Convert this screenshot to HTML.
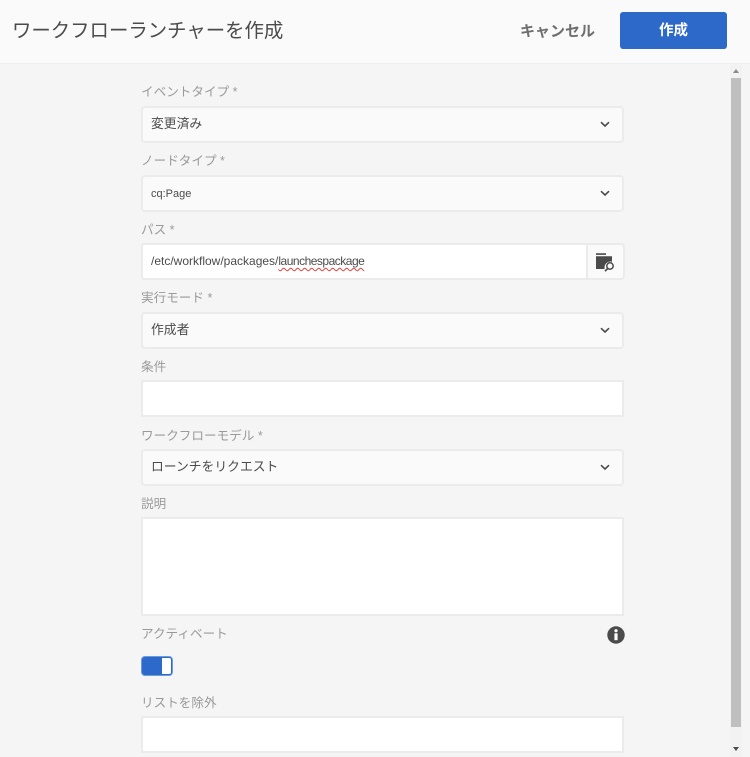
<!DOCTYPE html>
<html lang="ja">
<head>
<meta charset="utf-8">
<style>
html,body{margin:0;padding:0}
body{width:750px;height:757px;overflow:hidden;background:#f5f5f5;position:relative;font-family:"Liberation Sans","Noto Sans CJK JP",sans-serif;color:#4b4b4b}
.a{position:absolute;white-space:nowrap}
.hdr{left:0;top:0;width:750px;height:63px;background:#fafafa;border-bottom:1px solid #efefef}
.title{left:12px;top:18px;font-size:19.4px;line-height:26px;color:#4b4b4b}
.cancel{left:520px;top:21px;font-size:15px;line-height:22px;font-weight:bold;color:#6e6e6e}
.btn{left:620px;top:12px;width:107px;height:37px;background:#2d69c9;border-radius:3px;color:#fff;font-size:14.5px;font-weight:bold;line-height:38px;text-align:center}
.lbl{left:141px;font-size:12.6px;line-height:18px;color:#9a9a9a}
.f{left:141px;width:479px;border:2px solid #ebebeb;border-radius:4px}
.sel{background:#fafafa;height:33px;top:0}
.inp{background:#fff;border-radius:0}
.t{left:151px;font-size:12.8px;line-height:18px;color:#4b4b4b}
svg{position:absolute;display:block}
</style>
</head>
<body>
<div class="a hdr"></div>
<div class="a title">ワークフローランチャーを作成</div>
<div class="a cancel">キャンセル</div>
<div class="a btn">作成</div>

<div class="a lbl" style="top:83px">イベントタイプ *</div>
<div class="a f sel" style="top:106px"></div>
<div class="a t" style="top:115px">変更済み</div>
<svg style="left:600px;top:121px" width="10" height="7" viewBox="0 0 10 7"><path d="M1 1.2L5 5L9 1.2" fill="none" stroke="#4b4b4b" stroke-width="1.6"/></svg>

<div class="a lbl" style="top:152px">ノードタイプ *</div>
<div class="a f sel" style="top:175px"></div>
<div class="a t" style="top:185px;font-size:11px">cq:Page</div>
<svg style="left:600px;top:190px" width="10" height="7" viewBox="0 0 10 7"><path d="M1 1.2L5 5L9 1.2" fill="none" stroke="#4b4b4b" stroke-width="1.6"/></svg>

<div class="a lbl" style="top:221px">パス *</div>
<div class="a f inp" style="top:243px;height:33px;width:443px;border-right:0;border-radius:3px 0 0 3px"></div>
<div class="a" style="left:586px;top:243px;width:35px;height:33px;background:#fafafa;border:2px solid #ebebeb;border-radius:0 4px 4px 0"></div>
<div class="a t" style="top:252px;font-size:12px">/etc/workflow/packages/<span style="letter-spacing:-0.5px;text-decoration:underline wavy #e0403a 1px;text-underline-offset:2px">launchespackage</span></div>
<svg style="left:595px;top:252px" width="21" height="20" viewBox="0 0 21 20"><path d="M1 1.2h10v1.7H1zM1 4.3h16v5.4a6 6 0 0 0-7.3 7.3H1z" fill="#4b4b4b"/><circle cx="15" cy="14" r="3.2" fill="none" stroke="#4b4b4b" stroke-width="1.5"/><path d="M12.7 16.5L10 19.2" stroke="#4b4b4b" stroke-width="1.7"/></svg>

<div class="a lbl" style="top:289px">実行モード *</div>
<div class="a f sel" style="top:312px"></div>
<div class="a t" style="top:321px">作成者</div>
<svg style="left:600px;top:327px" width="10" height="7" viewBox="0 0 10 7"><path d="M1 1.2L5 5L9 1.2" fill="none" stroke="#4b4b4b" stroke-width="1.6"/></svg>

<div class="a lbl" style="top:358px">条件</div>
<div class="a f inp" style="top:380px;height:33px"></div>

<div class="a lbl" style="top:427px">ワークフローモデル *</div>
<div class="a f sel" style="top:449px"></div>
<div class="a t" style="top:458px">ローンチをリクエスト</div>
<svg style="left:600px;top:464px" width="10" height="7" viewBox="0 0 10 7"><path d="M1 1.2L5 5L9 1.2" fill="none" stroke="#4b4b4b" stroke-width="1.6"/></svg>

<div class="a lbl" style="top:495px">説明</div>
<div class="a f inp" style="top:517px;height:95px"></div>

<div class="a lbl" style="top:625px">アクティベート</div>
<svg style="left:607px;top:626px" width="18" height="18" viewBox="0 0 18 18"><circle cx="9" cy="9" r="8.7" fill="#4b4b4b"/><circle cx="9" cy="4.7" r="1.6" fill="#fff"/><path d="M7.4 7.3h3.2v6.9H7.4z" fill="#fff"/></svg>

<div class="a" style="left:141px;top:656px;width:32px;height:20px;box-sizing:border-box;background:#2d69c9;border:1px solid #6a9ae0;border-radius:4px"></div>
<div class="a" style="left:162px;top:658px;width:9px;height:16px;background:#fff;border-radius:0 2px 2px 0"></div>

<div class="a lbl" style="top:694px">リストを除外</div>
<div class="a f inp" style="top:716px;height:33px"></div>

<div class="a" style="left:730px;top:64px;width:12px;height:693px;background:#f2f2f2"></div>
<div class="a" style="left:731px;top:78px;width:10px;height:649px;background:#bfbfbf"></div>
<svg style="left:733px;top:69px" width="6" height="4" viewBox="0 0 6 4"><path d="M0 4L3 0L6 4z" fill="#8a8a8a"/></svg>
<svg style="left:733px;top:747px" width="6" height="4" viewBox="0 0 6 4"><path d="M0 0L3 4L6 0z" fill="#4b4b4b"/></svg>
</body>
</html>
